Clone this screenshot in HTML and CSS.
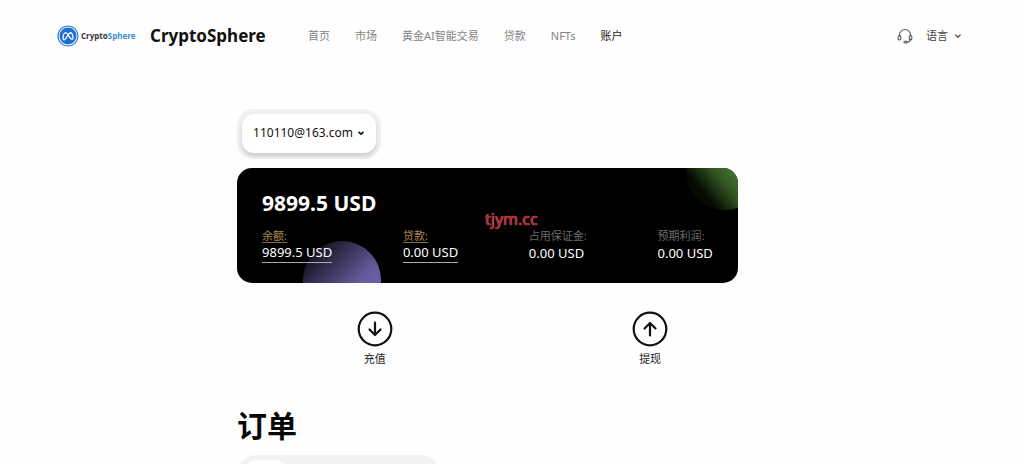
FILE: index.html
```html
<!DOCTYPE html>
<html lang="zh-CN">
<head>
<meta charset="utf-8">
<meta name="viewport" content="width=device-width, initial-scale=1">
<title>CryptoSphere</title>
<link rel="stylesheet" href="styles.css">
</head>
<body>
<header class="header">
  <a class="brand" href="#">
    <span class="logo">
      <svg class="logo-mark" viewBox="0 0 44 44" aria-hidden="true">
        <circle cx="22" cy="22" r="20" fill="#fff" stroke="#2f7fd6" stroke-width="2.4"/>
        <circle cx="22" cy="22" r="17" fill="#1b6fd4"/>
        <path d="M13 29c-2-3-1-12 3.500-13.500 3.500-.8 7 6.500 10 10.500 2 2.800 5 3.500 5.500.5.500-4-1.500-10.500-4.500-11-3-.3-5.500 4.500-8 8.500-2 3.500-4.500 7-6.500 5z" fill="none" stroke="#fff" stroke-width="2.600" stroke-linejoin="round"/>
      </svg>
      <span class="logo-text">Crypto<span class="logo-accent">Sphere</span></span>
    </span>
    <span class="brand-name">CryptoSphere</span>
  </a>
  <nav class="nav">
    <a href="#">首页</a>
    <a href="#">市场</a>
    <a href="#">黄金AI智能交易</a>
    <a href="#">贷款</a>
    <a href="#">NFTs</a>
    <a class="active" href="#">账户</a>
  </nav>
  <div class="tools">
    <svg class="headset" viewBox="0 0 16 16" fill="none" stroke="#555" stroke-width="1.100" stroke-linecap="round" stroke-linejoin="round" aria-hidden="true">
      <path d="M2.500 8V7a5.500 5.500 0 0 1 11 0v1M13.500 11c0 2-1.500 3-3.500 3.300"/>
      <rect x="1.200" y="7.500" width="2.600" height="4.500" rx="1.200"/>
      <rect x="12.200" y="7.500" width="2.600" height="4.500" rx="1.200"/>
      <rect x="7" y="13.300" width="3" height="1.700" rx=".8"/>
    </svg>
    <button class="language" type="button">语言
      <svg class="chevron" viewBox="0 0 8 8" aria-hidden="true"><path d="M1.500 2.800 4 5.200l2.500-2.400"/></svg>
    </button>
  </div>
</header>

<main class="main">
  <div class="account-frame">
    <button class="account" type="button">110110@163.com
      <svg class="chevron chevron-bold" viewBox="0 0 8 8" aria-hidden="true"><path d="M1.500 2.800 4 5.200l2.500-2.400"/></svg>
    </button>
  </div>

  <section class="card">
    <span class="orb orb-purple"></span>
    <span class="orb orb-green"></span>
    <span class="watermark">tjym.cc</span>
    <h2 class="total">9899.5 USD</h2>
    <div class="stats">
      <a class="stat" href="#"><span class="label">余额:</span><span class="value">9899.5 USD</span></a>
      <a class="stat" href="#"><span class="label">贷款:</span><span class="value">0.00 USD</span></a>
      <div class="stat"><span class="label">占用保证金:</span><span class="value">0.00 USD</span></div>
      <div class="stat"><span class="label">预期利润:</span><span class="value">0.00 USD</span></div>
    </div>
  </section>

  <div class="actions">
    <button class="action" type="button">
      <svg viewBox="0 0 36 36" aria-hidden="true"><circle cx="18" cy="18" r="16.300"/><path d="M18 11.500v12M12.500 18.500 18 24l5.500-5.500"/></svg>
      充值
    </button>
    <button class="action" type="button">
      <svg viewBox="0 0 36 36" aria-hidden="true"><circle cx="18" cy="18" r="16.300"/><path d="M18 24.500v-12M12.500 17.500 18 12l5.500 5.500"/></svg>
      提现
    </button>
  </div>

  <h1 class="orders-title">订单</h1>
  <div class="tabs"><span class="tab"></span></div>
</main>
</body>
</html>
```

FILE: styles.css
```css
* {
  box-sizing: border-box;
}

body {
  margin: 0;
  height: 100vh;
  overflow: hidden;
  background: #fefefe;
  color: #111;
  font: 12px/16px "Noto Sans", "Noto Sans CJK SC", sans-serif;
}

a {
  color: inherit;
  text-decoration: none;
}

button {
  border: 0;
  padding: 0;
  background: none;
  color: inherit;
  font: inherit;
}

.header {
  display: flex;
  align-items: center;
  height: 72px;
  padding: 0 62px 0 57px;
}

.brand,
.logo {
  display: flex;
  align-items: center;
}

.brand {
  gap: 13px;
}

.logo {
  gap: 2px;
  width: 80px;
}

.logo-mark {
  flex: none;
  width: 22px;
  height: 22px;
}

.logo-text {
  color: #333;
  font: bold 8px/12px "Open Sans", sans-serif;
}

.logo-accent {
  color: #3c8fda;
}

.brand-name {
  width: 117px;
  font-size: 17px;
  font-weight: 700;
  line-height: 24px;
  white-space: nowrap;
}

.nav {
  display: flex;
  gap: 25px;
  margin-left: 41px;
  color: #858585;
  font-size: 11px;
  white-space: nowrap;
}

.nav .active {
  color: #222;
}

.tools {
  display: flex;
  align-items: center;
  gap: 13px;
  margin-left: auto;
}

.headset {
  width: 16px;
  height: 16px;
}

.language,
.account {
  display: flex;
  align-items: center;
}

.language {
  gap: 6px;
  color: #444;
  font-size: 11px;
}

.chevron {
  width: 8px;
  height: 8px;
  fill: none;
  stroke: #444;
  stroke-width: 1.2;
}

.chevron-bold {
  stroke: #111;
  stroke-width: 1.6;
}

.main {
  width: 48.9%;
  min-width: 420px;
  margin-left: 23.15%;
  padding-top: 37px;
}

.account-frame {
  width: fit-content;
  padding: 5px 5px 6px;
  border-radius: 17px;
  background: #f1f1f1;
}

.account {
  gap: 4px;
  height: 39px;
  padding: 0 11px 2px;
  border-radius: 12px;
  background: #fff;
  box-shadow: 0 3px 4px #ccc;
}

.card {
  position: relative;
  overflow: hidden;
  margin-top: 9px;
  padding: 22px 25px 20px;
  border-radius: 15px;
  background: #000;
  color: #fff;
}

.orb {
  position: absolute;
  width: 78px;
  height: 78px;
  border-radius: 50%;
}

.orb-purple {
  left: 66px;
  bottom: -36px;
  background: linear-gradient(135deg, #0b0a12 8%, #655b9c 62%, #7569b0);
}

.orb-green {
  top: -36px;
  right: -26px;
  background: linear-gradient(50deg, #050a03 22%, #31551f 42%, #50813a 65%);
}

.watermark {
  position: absolute;
  top: 41px;
  left: 248px;
  color: #d01018;
  font-size: 16px;
  line-height: 20px;
  text-shadow: 0 0 1px #ddd;
}

.total {
  position: relative;
  margin: 0 0 12px;
  font-size: 21px;
  line-height: 27px;
}

.stats {
  position: relative;
  display: flex;
  justify-content: space-between;
}

.stat {
  display: flex;
  flex-direction: column;
  align-items: flex-start;
}

.label {
  color: #6b6b6b;
  font-size: 11px;
  line-height: 14px;
}

.value {
  font-size: 13px;
  line-height: 20px;
}

a.stat .label {
  border-bottom: 1px solid #8a6a36;
  color: #b08b50;
  line-height: 13px;
}

a.stat .value {
  border-bottom: 1px solid #aaa;
  line-height: 19px;
}

.actions {
  display: grid;
  grid-template-columns: 55% 55%;
  justify-items: center;
  margin-top: 28px;
}

.action {
  display: flex;
  flex-direction: column;
  align-items: center;
  gap: 4px;
  color: #222;
  font-size: 11px;
}

.action svg {
  width: 36px;
  height: 36px;
  fill: none;
  stroke: #111;
  stroke-width: 2.2;
  stroke-linecap: round;
  stroke-linejoin: round;
}

.orders-title {
  margin: 37px 0 7px;
  color: #080808;
  font-size: 30px;
  line-height: 44px;
}

.tabs {
  width: 203px;
  height: 40px;
  padding: 5px 6px;
  border-radius: 20px;
  background: #f2f2f2;
}

.tab {
  display: block;
  width: 46px;
  height: 30px;
  border-radius: 15px;
  background: #fff;
}
```
